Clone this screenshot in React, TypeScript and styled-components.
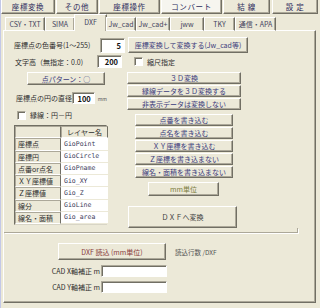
import React from 'react';
import styled, {createGlobalStyle, css} from 'styled-components';

const GlobalStyle = createGlobalStyle`
  html, body {
    margin: 0;
    padding: 0;
    background: #ece9d8;
  }
  body {
    font-family: "Noto Sans CJK JP", "Liberation Sans", sans-serif;
    font-size: 7px;
    color: #2e2e2e;
  }
`;

const raised = css`
  border-top: 1px solid #ffffff;
  border-left: 1px solid #ffffff;
  border-right: 1px solid #716f64;
  border-bottom: 1px solid #716f64;
  box-shadow: inset -1px -1px 0 #aca899;
`;

const sunken = css`
  border-top: 1px solid #aca899;
  border-left: 1px solid #aca899;
  border-right: 1px solid #ffffff;
  border-bottom: 1px solid #ffffff;
  box-shadow: inset 1px 1px 0 #716f64;
`;

const Window = styled.div`
  width: 320px;
  height: 308px;
  overflow: hidden;
  background: #ece9d8;
  box-sizing: border-box;
  border-left: 1px solid #c3c8e8;
  * {
    box-sizing: border-box;
  }
`;

const NavBar = styled.div`
  display: flex;
  height: 15px;
  margin-top: -1px;
`;

const NavButton = styled.div<{$w: number; $ml: number; $active?: boolean}>`
  width: ${p => p.$w}px;
  margin-left: ${p => p.$ml}px;
  height: 15px;
  display: flex;
  align-items: center;
  justify-content: center;
  font-size: 7.5px;
  letter-spacing: 0.6px;
  color: #2c2c5c;
  background: ${p => (p.$active ? '#f6f5ef' : '#ece9d8')};
  ${raised};
`;

const TabStrip = styled.div`
  display: flex;
  align-items: flex-end;
  height: 16px;
  margin-top: 1px;
  margin-left: 4px;
  position: relative;
  z-index: 2;
  margin-bottom: -1px;
`;

const Tab = styled.div<{$w: number; $active?: boolean}>`
  width: ${p => p.$w}px;
  height: ${p => (p.$active ? 17 : 14)}px;
  display: flex;
  align-items: center;
  justify-content: center;
  color: #45455e;
  font-size: 7px;
  background: #ece9d8;
  border-top: 1px solid #ffffff;
  border-left: 1px solid #ffffff;
  border-right: 1px solid #716f64;
  box-shadow: inset -1px 0 0 #aca899;
  margin-left: ${p => (p.$active ? -1 : 0)}px;
  margin-right: ${p => (p.$active ? -1 : 0)}px;
  padding-bottom: ${p => (p.$active ? 2 : 0)}px;
  ${p => !p.$active && 'border-bottom: 1px solid #ffffff;'}
`;

const Panel = styled.div`
  margin-left: 2px;
  width: 313px;
  height: 273px;
  ${raised};
  display: flex;
  flex-direction: column;
`;

const Row = styled.div<{$mt?: number; $pl?: number}>`
  display: flex;
  align-items: center;
  margin-top: ${p => p.$mt ?? 0}px;
  padding-left: ${p => p.$pl ?? 0}px;
`;

const Label = styled.span<{$w?: number; $right?: boolean}>`
  display: inline-block;
  white-space: nowrap;
  width: ${p => (p.$w ? `${p.$w}px` : 'auto')};
  text-align: ${p => (p.$right ? 'right' : 'left')};
  color: #2e2e2e;
`;

const Input = styled.div<{$w: number; $h: number; $ml?: number}>`
  width: ${p => p.$w}px;
  height: ${p => p.$h}px;
  margin-left: ${p => p.$ml ?? 0}px;
  background: #ffffff;
  ${sunken};
  display: flex;
  align-items: center;
  justify-content: flex-end;
  padding-right: 3px;
  font-weight: bold;
  color: #111;
  font-size: 7.5px;
`;

const Button = styled.div<{
  $w: number;
  $h: number;
  $ml?: number;
  $color?: string;
}>`
  width: ${p => p.$w}px;
  height: ${p => p.$h}px;
  margin-left: ${p => p.$ml ?? 0}px;
  flex-shrink: 0;
  display: flex;
  align-items: center;
  justify-content: center;
  white-space: nowrap;
  overflow: hidden;
  color: ${p => p.$color ?? '#3b3b7c'};
  background: #ece9d8;
  ${raised};
`;

const Check = styled.div<{$ml?: number}>`
  width: 9px;
  height: 9px;
  margin-left: ${p => p.$ml ?? 0}px;
  margin-right: 4px;
  background: #ffffff;
  ${sunken};
`;

const Columns = styled.div`
  display: flex;
  align-items: flex-start;
  margin-top: 4px;
`;

const LeftCol = styled.div`
  width: 93px;
  margin-left: 10px;
  display: flex;
  flex-direction: column;
`;

const RightCol = styled.div`
  margin-left: 20px;
  display: flex;
  flex-direction: column;
`;

const ButtonStack = styled.div<{$mt?: number; $ml?: number}>`
  display: flex;
  flex-direction: column;
  gap: 1px;
  margin-top: ${p => p.$mt ?? 0}px;
  margin-left: ${p => p.$ml ?? 0}px;
`;

const Unit = styled.span`
  font-size: 5px;
  color: #555;
  margin-left: 3px;
`;

const LayerTable = styled.div`
  margin-top: 5px;
  display: grid;
  grid-template-columns: 46px 47px;
  grid-auto-rows: 12.25px;
  border: 1px solid #716f64;
  border-right-color: #d8d5c6;
  border-bottom-color: #d8d5c6;
`;

const NameCell = styled.div`
  display: flex;
  align-items: center;
  padding-left: 2px;
  white-space: nowrap;
  color: #2e2e2e;
  background: #ece9d8;
  border-top: 1px solid #aca899;
  border-left: 1px solid #aca899;
  border-right: 1px solid #716f64;
  border-bottom: 1px solid #ffffff;
`;

const HeadCell = styled(NameCell)`
  justify-content: center;
  padding-left: 0;
`;

const ValueCell = styled.div`
  display: flex;
  align-items: center;
  padding-left: 3px;
  background: #ffffff;
  color: #3a3a5a;
  font-family: "DejaVu Sans Mono", "Noto Sans CJK JP", monospace;
  font-size: 6.5px;
  border-bottom: 1px solid #ece9d8;
`;

const Separator = styled.div`
  width: 294px;
  height: 5px;
  border-right: 1px solid #aca899;
  border-bottom: 1px solid #aca899;
  box-shadow: 1px 1px 0 #ffffff;
`;

const Note = styled.span`
  margin-left: 9px;
  font-size: 6.5px;
  color: #555;
`;

const layers: [string, string][] = [
  ['座標点', 'GioPoint'],
  ['座標円', 'GioCircle'],
  ['点番or点名', 'GioPname'],
  ['ＸＹ座標値', 'Gio_XY'],
  ['Ｚ座標値', 'Gio_Z'],
  ['線分', 'GioLine'],
  ['線名・面積', 'Gio_area'],
];

const navItems = [
  {label: '座標変換', w: 54, ml: 0},
  {label: 'その他', w: 42, ml: 1},
  {label: '座標操作', w: 61, ml: 1},
  {label: 'コンバート', w: 61, ml: 1, active: true},
  {label: '結 線', w: 47, ml: 1},
  {label: '設 定', w: 46, ml: 2},
];

const tabs = [
  {label: 'CSY・TXT', w: 40},
  {label: 'SIMA', w: 30},
  {label: 'DXF', w: 33, active: true},
  {label: 'Jw_cad', w: 30},
  {label: 'Jw_cad+', w: 34},
  {label: 'jww', w: 34},
  {label: 'TKY', w: 31},
  {label: '通信・APA', w: 41},
];

export default function App() {
  return (
    <>
      <GlobalStyle />
      <Window>
        <NavBar>
          {navItems.map(n => (
            <NavButton key={n.label} $w={n.w} $ml={n.ml} $active={n.active}>
              {n.label}
            </NavButton>
          ))}
        </NavBar>

        <TabStrip>
          {tabs.map(t => (
            <Tab key={t.label} $w={t.w} $active={t.active}>
              {t.label}
            </Tab>
          ))}
        </TabStrip>

        <Panel>
          <Row $mt={6} $pl={10}>
            <Label $w={86}>座標点の色番号(1～255)</Label>
            <Input $w={25} $h={15}>5</Input>
            <Button $w={120} $h={16} $ml={3}>
              座標変換して変換する(Jw_cad等)
            </Button>
          </Row>

          <Row $mt={2} $pl={11}>
            <Label $w={82}>文字高（無指定：0.0)</Label>
            <Input $w={25} $h={13}>200</Input>
            <Check $ml={12} />
            <Label>縮尺指定</Label>
          </Row>

          <Columns>
            <LeftCol>
              <Button $w={78} $h={13} $ml={13}>
                点パターン：○
              </Button>
              <Row $mt={7} $pl={2}>
                <Label $w={64}>座標点の円の直径</Label>
                <Input $w={26} $h={12}>100</Input>
                <Unit>mm</Unit>
              </Row>
              <Row $mt={6} $pl={3}>
                <Check />
                <Label>縁線：円－円</Label>
              </Row>
              <LayerTable>
                <HeadCell />
                <HeadCell>レイヤー名</HeadCell>
                {layers.map(([name, value]) => (
                  <React.Fragment key={name}>
                    <NameCell>{name}</NameCell>
                    <ValueCell>{value}</ValueCell>
                  </React.Fragment>
                ))}
              </LayerTable>
            </LeftCol>

            <RightCol>
              <ButtonStack>
                <Button $w={114} $h={12}>３Ｄ変換</Button>
                <Button $w={114} $h={12}>縁線データを３Ｄ変換する</Button>
                <Button $w={114} $h={12}>非表示データは変換しない</Button>
              </ButtonStack>
              <ButtonStack $mt={4} $ml={8}>
                <Button $w={98} $h={12}>点番を書き込む</Button>
                <Button $w={98} $h={12}>点名を書き込む</Button>
                <Button $w={98} $h={12}>ＸＹ座標を書き込む</Button>
                <Button $w={98} $h={12}>Ｚ座標を書き込まない</Button>
                <Button $w={98} $h={12}>線名・面積を書き込まない</Button>
              </ButtonStack>
              <ButtonStack $mt={4} $ml={21}>
                <Button $w={71} $h={14} $color="#7c7c3c">
                  mm単位
                </Button>
              </ButtonStack>
              <ButtonStack $mt={10} $ml={1}>
                <Button $w={109} $h={22} $color="#3c3c3c">
                  ＤＸＦへ変換
                </Button>
              </ButtonStack>
            </RightCol>
          </Columns>

          <Separator />

          <Row $mt={10} $pl={54}>
            <Button $w={108} $h={17} $color="#8a3c3c">
              DXF 読込 (mm単位)
            </Button>
            <Note>読込行数 /DXF</Note>
          </Row>

          <Row $mt={5} $pl={42}>
            <Label $w={54} $right>
              CAD X軸補正 m
            </Label>
            <Input $w={66} $h={12} $ml={1} />
          </Row>
          <Row $mt={4} $pl={42}>
            <Label $w={54} $right>
              CAD Y軸補正 m
            </Label>
            <Input $w={66} $h={12} $ml={1} />
          </Row>
        </Panel>
      </Window>
    </>
  );
}
